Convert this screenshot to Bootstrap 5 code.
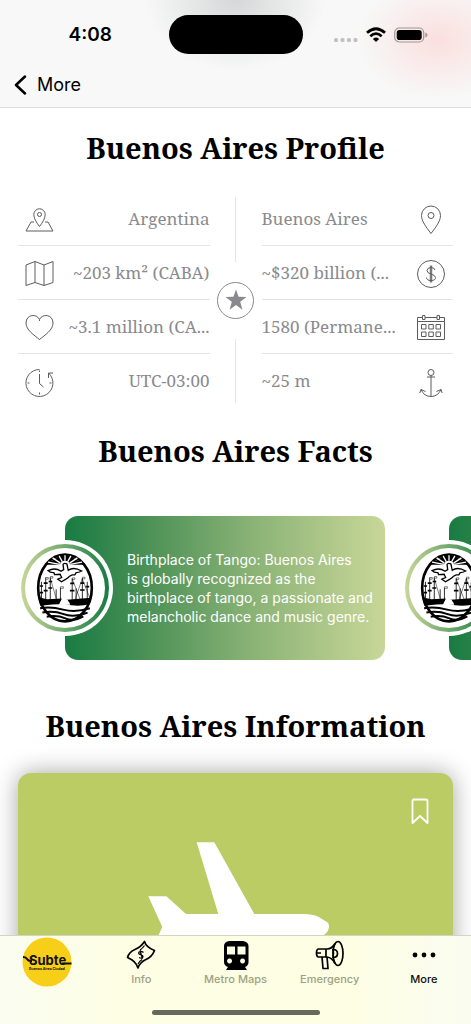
<!DOCTYPE html>
<html lang="en">
<head>
<meta charset="utf-8">
<meta name="viewport" content="width=device-width, initial-scale=1">
<title>Buenos Aires Profile</title>
<link href="https://cdn.jsdelivr.net/npm/bootstrap@5.3.0/dist/css/bootstrap.min.css" rel="stylesheet">
<style>
  body { font-family: Inter, "Liberation Sans", sans-serif; color: #000; background: #fff; }
  .top-bar {
    background: radial-gradient(ellipse 80px 58px at 93% 40px, #fbdfdf, rgba(251,223,223,0)),
      radial-gradient(ellipse 90px 70px at 50% 0, #d6d7d8, rgba(214,215,216,0)), #f7f8f7;
    border-bottom: 1px solid #dcdddd;
  }
  .status-row { padding-top: 15px; height: 54px; }
  .clock { font-size: 19px; font-weight: 600; padding: 2px 0 0 12px; }
  .signals { padding-right: 12px; gap: 8px; }
  .island { width: 134px; height: 39px; border-radius: 20px; background: #000; }
  .back-row { height: 53px; padding: 0 14px; }
  .back-link { font-size: 18px; gap: 10px; padding-top: 8px; }
  .page-body { scrollbar-width: none; min-height: 0; }
  .page-body::-webkit-scrollbar { display: none; }
  .section-title { font-family: "Noto Serif", "Liberation Serif", serif; font-weight: 700; font-size: 29px; line-height: 40px; margin: 0; }
  .profile { margin: 24px 18px 0; }
  .fact-list li { height: 54px; padding: 0 7px 0 0; border-bottom: 1px solid #e4e4e5; font-family: "Noto Serif", "Liberation Serif", serif; font-size: 17px; color: #8a8a8e; white-space: nowrap; }
  .fact-list li:last-child { border-bottom: 0; }
  .fact-list.left-list li { padding: 0 0 0 7px; }
  .line-icon { width: 30px; height: 30px; fill: none; stroke: #5c5c5e; stroke-width: 1; flex: none; margin: 3px 0 0; }
  .spine { width: 52px; padding: 5px 0 5px; gap: 20px; }
  .spine i { width: 1px; background: #e4e4e5; flex: 1; }
  .star-ring { width: 37px; height: 37px; border: 1px solid #8a8a8e; border-radius: 50%; }
  .facts-strip { margin-top: 45px; padding-left: 65px; gap: 64px; }
  .fact-card { width: 320px; height: 144px; flex: none; border-radius: 13px; padding: 0 12px 0 62px; background: linear-gradient(90deg, #187b42, #4b9056 25%, #8db477 60%, #c8d798); color: #fff; font-size: 14px; line-height: 19px; }
  .crest { left: -48px; top: 24px; width: 96px; height: 96px; border-radius: 50%; background: #fff; padding: 4px; }
  .crest-ring { border-radius: 50%; padding: 4px; background: linear-gradient(90deg, #c8d798, #187b42); }
  .crest-face { border-radius: 50%; background: #fff; }
  .profile + .section-title { margin-top: 23px; }
  .facts-strip + .section-title { margin-top: 46px; }
  .info-card { margin: 27px 18px 24px; border-radius: 13px; background: #bbcc65; box-shadow: 0 0 24px rgba(0,0,0,.36); padding: 24px 24px 48px; }
  .tab-bar { background: linear-gradient(90deg, #fafdf0, #fdfee4 25%, #fdfee4 75%, #fafcf0); border-top: 1px solid #d3d5c4; }
  .tabs { height: 66px; }
  .tabs a { color: #9da283; font-size: 11px; line-height: 14px; font-weight: 500; flex: 1 1 0; gap: 2px; padding-top: 4px; }
  .tabs a.current { color: #111; }
  .home-line { width: 168px; height: 5px; border-radius: 3px; background: #666a5c; margin: 8px auto 9px; }
</style>
</head>
<body>
<svg width="0" height="0" class="position-absolute" aria-hidden="true">
  <symbol id="crest" viewBox="74 64 180 220">
    <ellipse cx="164" cy="174" rx="82" ry="102" fill="#fff" stroke="#000" stroke-width="8"/>
    <path d="M150 74L178 74L224 103H180Q176 91 164 91T148 103H104Z"/>
    <path d="M156 94L146 76M150 98L126 82M148 102L112 95M172 94L182 76M178 98L202 82M180 102L216 95M164 91V74" stroke="#fff" stroke-width="4"/>
    <path d="M158 102Q163 96 170 101L174 120Q190 108 215 122Q206 127 198 127L194 134H186L178 138Q174 144 167 147L153 155L142 147L154 142Q150 135 149 132L132 133L130 127Q119 128 112 121Q134 110 152 123L160 118Z" fill="#fff" stroke="#000" stroke-width="4"/>
    <path d="M92 155V207M105 142V210M119 140V210M137 178V210M150 172V210M186 144V210M198 175V210M217 142V210M232 155V208" stroke="#000" stroke-width="2.500"/>
    <path d="M87 168H97M87 188H97M99 159H111M99 182H111M114 154H125M113 174H125M180 160H192M179 182H193M211 159H223M210 180H224M227 170H238" stroke="#000" stroke-width="5"/>
    <path d="M105 142h8v5h-8M119 139h8v5h-8M150 170h9v5h-9M186 143h8v5h-8M217 141h8v5h-8M119 145L137 205M186 146L210 208M217 145L195 208M217 147L240 205" fill="none" stroke="#000" stroke-width="1.500"/>
    <path d="M82 202L110 208L154 206L149 222H180L169 210L245 204L240 224Q200 233 164 223Q125 224 88 228Z" fill="#000"/>
    <path d="M153 211H172L180 225H145Z" fill="#fff"/>
    <g fill="none" stroke="#000" stroke-width="6"><path d="M88 236Q120 230 158 240T240 236M95 249Q130 243 160 254T233 249M108 262Q140 256 165 267T220 261"/></g>
  </symbol>
</svg>

<div class="vh-100 d-flex flex-column overflow-hidden">
  <header class="top-bar flex-shrink-0">
    <div class="status-row d-flex align-items-center">
      <div class="clock flex-fill text-center w-25">4:08</div>
      <div class="island flex-shrink-0"></div>
      <div class="signals flex-fill w-25 d-flex justify-content-center align-items-center">
        <svg width="24" height="16" viewBox="0 0 24 16" fill="#c3c0bf" aria-hidden="true"><rect y="11" width="4" height="4" rx="1.5"/><rect x="6.5" y="11" width="4" height="4" rx="1.5"/><rect x="13" y="11" width="4" height="4" rx="1.5"/><rect x="19.500" y="11" width="4" height="4" rx="1.5"/></svg>
        <svg width="20" height="16" viewBox="0 0 20 16" fill="none" stroke="#000" aria-hidden="true"><path d="M1 5.800Q10-2.400 19 5.800" stroke-width="2.800"/><path d="M4.300 9.300Q10 4 15.700 9.300" stroke-width="2.600"/><path d="M10 15L6.900 11.900Q10 9.200 13.100 11.900Z" fill="#000" stroke="none"/></svg>
        <svg width="34" height="16" viewBox="0 0 34 16" aria-hidden="true"><rect x=".7" y="1" width="29" height="14" rx="4.500" fill="none" stroke="#9e9695" stroke-width="1.200"/><rect x="2.700" y="3" width="25" height="10" rx="2.800"/><path d="M31.300 5.500Q33.500 6.300 33.500 8T31.300 10.500Z" fill="#9e9695"/></svg>
      </div>
    </div>
    <nav class="back-row d-flex align-items-center">
      <a href="#" class="back-link d-flex align-items-center text-decoration-none text-black">
        <svg width="13" height="20" viewBox="0 0 13 20" fill="none" stroke="#000" stroke-width="2.500" stroke-linecap="round" stroke-linejoin="round" aria-hidden="true"><path d="M11 1.500L2 10L11 18.500"/></svg>
        More
      </a>
    </nav>
  </header>

  <main class="page-body flex-fill overflow-auto">
    <h1 class="section-title text-center mt-3 pt-1">Buenos Aires Profile</h1>
    <section class="profile d-flex">
      <ul class="fact-list left-list list-unstyled m-0 flex-fill w-25">
        <li class="d-flex align-items-center justify-content-between">
          <svg class="line-icon" viewBox="0 0 30 30"><path d="M14.500 21.500C11 17 8.800 13 8.800 9.500a5.700 5.700 0 0 1 11.400 0C20.200 13 18 17 14.500 21.500ZM9 17H6L1 26H28L23 17H20"/><circle cx="14.500" cy="9.500" r="2"/></svg>
          <span>Argentina</span></li>
        <li class="d-flex align-items-center justify-content-between">
          <svg class="line-icon" viewBox="0 0 30 30"><path d="M1 6L10 2.500L19 6L28 2.500V23.500L19 26.500L10 23.500L1 26.500ZM10 2.500V23.500M19 6V26.500"/></svg>
          <span>~203 km² (CABA)</span></li>
        <li class="d-flex align-items-center justify-content-between">
          <svg class="line-icon" viewBox="0 0 30 30"><path d="M14.500 8V6.500C12 .5 1 1 1 10C1 17 9 22 14.500 26.500C20 22 28 17 28 10C28 1 17 .5 14.500 6.500"/></svg>
          <span>~3.1 million (CA...</span></li>
        <li class="d-flex align-items-center justify-content-between">
          <svg class="line-icon" viewBox="0 0 30 30"><path d="M14.500 1.500A13.500 13.500 0 1 0 23.500 5M23.500 10V5H28M14.500 6V15.500L18.500 19M14.500 2.500V4M14.500 24.500V26.500M2.500 15H4.500M24.500 15H26.500"/></svg>
          <span>UTC-03:00</span></li>
      </ul>
      <div class="spine d-flex flex-column align-items-center flex-shrink-0" aria-hidden="true">
        <i></i>
        <div class="star-ring d-flex align-items-center justify-content-center flex-shrink-0">
          <svg width="22" height="22" viewBox="0 0 24 24" fill="#8a8a8e"><path d="M12 .500L14.800 8.500L23.500 8.800L16.600 14L19 22.500L12 17.500L5 22.500L7.400 14L.500 8.800L9.200 8.500Z"/></svg>
        </div>
        <i></i>
      </div>
      <ul class="fact-list list-unstyled m-0 flex-fill w-25">
        <li class="d-flex align-items-center justify-content-between"><span>Buenos Aires</span>
          <svg class="line-icon" viewBox="0 0 30 30"><path d="M15 28.500C10 22 5.500 16 5.500 10.500a9.500 9.500 0 0 1 19 0C24.500 16 20 22 15 28.500Z"/><circle cx="15" cy="10.500" r="3"/></svg></li>
        <li class="d-flex align-items-center justify-content-between"><span>~$320 billion (...</span>
          <svg class="line-icon" viewBox="0 0 30 30"><circle cx="15" cy="15" r="13.500"/><path d="M19 11Q18.500 8.500 15 8.500T11 11.500Q11 14 15 15T19.500 18.500Q19.500 21.500 15 21.500T10.500 18.500M14.300 6.500V23.500M15.700 6.500V23.500"/></svg></li>
        <li class="d-flex align-items-center justify-content-between"><span>1580 (Permane...</span>
          <svg class="line-icon" viewBox="0 0 30 30"><path d="M6.500 4.500H1.500V26.500H28.500V4.500H23.500M9 4.500H21M1.500 8.500H28.500M6.500 2.500H9V6.500H6.500ZM21 2.500H23.500V6.500H21ZM5.500 11.500h4.500v4.500H5.500ZM12.800 11.500h4.500v4.500h-4.500ZM20 11.500h4.500v4.500H20ZM5.500 19h4.500v4.500H5.500ZM12.800 19h4.500v4.500h-4.500ZM20 19h4.500v4.500H20Z"/></svg></li>
        <li class="d-flex align-items-center justify-content-between"><span>~25 m</span>
          <svg class="line-icon" viewBox="0 0 30 30"><circle cx="15" cy="4.500" r="3"/><path d="M15 7.500V29M11 9H19M3.800 25L5 21.500L9.500 23.500M5 21.500Q8 28.500 15 28.500T25 21.500M26.200 25L25 21.500L20.500 23.500"/></svg></li>
      </ul>
    </section>

    <h2 class="section-title text-center">Buenos Aires Facts</h2>
    <section class="facts-strip d-flex overflow-hidden">
      <article class="fact-card position-relative d-flex align-items-center">
        <div class="crest position-absolute"><div class="crest-ring h-100"><div class="crest-face h-100 d-flex align-items-center justify-content-center"><svg width="60" height="72" role="img" aria-label="Crest"><use href="#crest"/></svg></div></div></div>
        <p class="m-0">Birthplace of Tango: Buenos Aires<br>is globally recognized as the<br>birthplace of tango, a passionate and<br>melancholic dance and music genre.</p>
      </article>
      <article class="fact-card position-relative">
        <div class="crest position-absolute"><div class="crest-ring h-100"><div class="crest-face h-100 d-flex align-items-center justify-content-center"><svg width="60" height="72" role="img" aria-label="Crest"><use href="#crest"/></svg></div></div></div>
      </article>
    </section>

    <h2 class="section-title text-center">Buenos Aires Information</h2>
    <article class="info-card">
      <div class="d-flex justify-content-end">
        <button type="button" class="btn p-0 border-0 d-flex" aria-label="Bookmark"><svg width="18" height="28" viewBox="0 0 18 28" fill="none" stroke="#fff" stroke-width="1.800" stroke-linejoin="round"><path d="M1.500 26V4Q1.500 2.500 3 2.500H15Q16.500 2.500 16.500 4V26L9 19Z"/></svg></button>
      </div>
      <svg class="d-block mx-auto mt-3" width="186" height="172" viewBox="143 841 186 172" fill="#fff" role="img" aria-label="Airplane"><path d="M196.700 842.300H214.300L254.300 914H303Q313 914 318.300 916.700L327 922Q329 923 329 927Q328 933 323.500 935Q316 940 303 940H254L214 1012H197L218 940H186L166 958H148L162.300 927L148.300 896.300H166.300L186 914H218.300Z"/></svg>
    </article>
  </main>

  <footer class="tab-bar flex-shrink-0 position-relative">
    <nav class="tabs d-flex">
      <a href="#" class="p-0 d-flex justify-content-center align-items-start text-decoration-none" aria-label="Subte">
        <svg width="50" height="52" viewBox="0 0 50 52"><circle cx="25" cy="26" r="24.500" fill="#f8cf18"/><path d="M1 21Q4 21 5 23T9 25H10M40 27.500H49.500" fill="none" stroke="#111" stroke-width="2"/><text x="7" y="29" font-family="Inter, sans-serif" font-weight="700" font-size="13" fill="#111">Subte</text><text x="7" y="34" font-family="Inter, sans-serif" font-weight="700" font-size="3.500" fill="#111">Buenos Aires Ciudad</text></svg>
      </a>
      <a href="#" class="d-flex flex-column align-items-center text-decoration-none">
        <svg width="30" height="30" viewBox="0 0 30 30" fill="none" stroke="#000" stroke-width="1.700" stroke-linejoin="round"><path d="M1.500 17.500Q3 12 9 9.500T18.500 1.500Q20 7 28.500 10.500Q26 17 20 19.500T12 28Q10 21 1.500 17.500Z"/><path d="M18.500 5.500Q16.500 8.500 14 10M12 24Q13.500 21 16 19.500" stroke-width="1.200"/><path d="M17.500 12.500Q15 10.500 13 12Q12 14 14.500 14.700T17 16.500Q16.500 19 13 17.500M14 10.500L16.500 19" stroke-width="1.300"/></svg>
        Info</a>
      <a href="#" class="d-flex flex-column align-items-center text-decoration-none">
        <svg width="30" height="30" viewBox="0 0 30 30"><path fill-rule="evenodd" d="M8 1H22Q27.500 2 27.500 6V22Q27.500 25.500 24 27L26 30H5L7 27Q3 25.500 3 22V6Q3 2 8 1ZM6 6.500V14.500H14V6.500ZM16.500 6.500V14.500H24.500V6.500ZM8.500 18.500a2.500 2.500 0 1 0 .1 0ZM21.500 18.500a2.500 2.500 0 1 0 .1 0Z"/></svg>
        Metro Maps</a>
      <a href="#" class="d-flex flex-column align-items-center text-decoration-none">
        <svg width="30" height="30" viewBox="0 0 30 30" fill="none" stroke="#000" stroke-width="1.700" stroke-linejoin="round"><ellipse cx="23" cy="13.500" rx="5" ry="12"/><path d="M20 3.500Q17 9 12 9H3.500Q1.500 9 1.500 13T3.500 17H12Q17 17.500 20 23.500M11 9V17M2 13H6M7 17L8 28.500H13L12 17M18 9.500Q22.500 9.500 22.500 13.500T18 17.500Q19 13.500 18 9.500Z"/></svg>
        Emergency</a>
      <a href="#" class="current d-flex flex-column align-items-center text-decoration-none" aria-current="page">
        <svg width="30" height="30" viewBox="0 0 30 30"><circle cx="6" cy="15" r="2.400"/><circle cx="15" cy="15" r="2.400"/><circle cx="24" cy="15" r="2.400"/></svg>
        More</a>
    </nav>
    <div class="home-line"></div>
  </footer>
</div>
<script src="https://cdn.jsdelivr.net/npm/bootstrap@5.3.0/dist/js/bootstrap.bundle.min.js"></script>
</body>
</html>
